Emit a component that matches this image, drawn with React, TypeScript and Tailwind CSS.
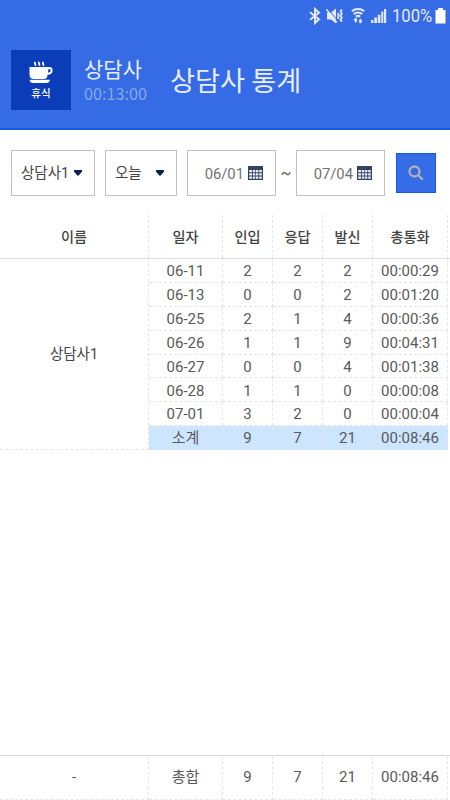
import React from 'react';

type Row = {
  date: string;
  incoming: number;
  answered: number;
  outgoing: number;
  total: string;
};

const rows: Row[] = [
  { date: '06-11', incoming: 2, answered: 2, outgoing: 2, total: '00:00:29' },
  { date: '06-13', incoming: 0, answered: 0, outgoing: 2, total: '00:01:20' },
  { date: '06-25', incoming: 2, answered: 1, outgoing: 4, total: '00:00:36' },
  { date: '06-26', incoming: 1, answered: 1, outgoing: 9, total: '00:04:31' },
  { date: '06-27', incoming: 0, answered: 0, outgoing: 4, total: '00:01:38' },
  { date: '06-28', incoming: 1, answered: 1, outgoing: 0, total: '00:00:08' },
  { date: '07-01', incoming: 3, answered: 2, outgoing: 0, total: '00:00:04' },
];

const StatusBar = () => (
  <div className="flex h-8 items-center pl-[309px] text-[#e4ebff]">
    <svg width="12" height="18" viewBox="0 0 12 18" fill="none" stroke="currentColor" strokeWidth="1.9">
      <path d="M1 5.2 10 12.2 6 16V2l4 3.8-9 7" />
    </svg>
    <svg className="ml-[5px]" width="18" height="18" viewBox="0 0 18 18">
      <path d="M1 5.5h4l5-4v15l-5-4H1z" fill="currentColor" />
      <path d="M2 2 11.5 13.4" stroke="#356be5" strokeWidth="1" />
      <path d="M.3 2.2 10.8 15.5" stroke="currentColor" strokeWidth="1.5" />
      <path d="M12.3 6v6M15.8 2.5l-1.3 2 1.3 2-1.3 2.2 1.3 2-1.3 2 1.3 2" fill="none" stroke="currentColor" strokeWidth="1.8" />
    </svg>
    <svg className="ml-[7px]" width="14" height="18" viewBox="0 0 14 18" fill="none" stroke="currentColor" strokeWidth="2">
      <path d="M.8 4.2c3.6-3 8.8-3 12.4 0M2.8 7.1c2.5-2 5.9-2 8.4 0M4.8 9.8c1.4-1.2 3-1.2 4.4 0" />
      <path d="M2.6 12.6h1V11h2v1.6h1l-2 3.6zM7.4 14.6h1v1.6h2v-1.6h1l-2-3.4z" fill="currentColor" stroke="none" />
    </svg>
    <svg className="ml-[5px]" width="17" height="18" viewBox="0 0 17 18" fill="currentColor">
      <path d="M1 13h2.4v3H1zM4.3 10.5H7V16H4.3zM7.8 7.8h2.6V16H7.8zM11.3 4.5h2V16h-2zM14 2h2.2v14H14z" />
    </svg>
    <span className="ml-[5px] w-[41px] origin-left scale-x-[0.9] text-[18.5px] leading-none whitespace-nowrap">100%</span>
    <svg className="ml-[2px]" width="11" height="18" viewBox="0 0 11 18" fill="#fff">
      <path d="M3 1h5v2h2.5v13.5H.5V3H3z" />
    </svg>
  </div>
);

const CoffeeIcon = () => (
  <svg width="24" height="23" viewBox="0 0 24 23" fill="#fff">
    <path d="M.5 6h19.5c2.4 0 3.6 1.2 3.6 3.2 0 3-1.8 4.6-5 4.6 0 2.8-1.6 4.2-3.6 4.2H5c-3 0-4.5-1.5-4.5-4.5z" />
    <path d="M19.3 8.2h1.1c1 0 1.2.5 1.2 1.2 0 1.4-1 2.2-2.5 2.2z" fill="#0b3db8" />
    <path d="M.5 18.8h20.5c-.5 2.3-1.7 3.3-3.5 3.3H4c-2 0-3-1-3.5-3.3z" />
    <path d="M6.2.8c-1.2 1.2 1 2.2 0 4M10.2.8c-1.2 1.2 1 2.2 0 4M14.2.8c-1.2 1.2 1 2.2 0 4" fill="none" stroke="#fff" strokeWidth="1.8" />
  </svg>
);

const CalendarIcon = () => (
  <svg width="15" height="14" viewBox="0 0 15 14">
    <path d="M0 0h15v14H0z" fill="#344263" />
    <path d="M1.2 4h3v2.3h-3zM5 4h2.3v2.3H5zM8 4h2.3v2.3H8zM11.2 4h2.6v2.3h-2.6zM1.2 7.2h3v2.3h-3zM5 7.2h2.3v2.3H5zM8 7.2h2.3v2.3H8zM11.2 7.2h2.6v2.3h-2.6zM1.2 10.4h3v2.4h-3zM5 10.4h2.3v2.4H5zM8 10.4h2.3v2.4H8zM11.2 10.4h2.6v2.4h-2.6z" fill="#eceef3" />
  </svg>
);

const Caret = () => (
  <svg width="8" height="6" viewBox="0 0 8 6">
    <path d="M0 0h8v1.5L4.8 5.5H3.2L0 1.5z" fill="#0c2058" />
  </svg>
);

const DateInput: React.FC<{ value: string }> = ({ value }) => (
  <div className="flex h-[46px] w-[89px] items-center justify-end border border-[#c2c2c2] pr-[12px]">
    <span className="mr-[4px] pt-[3px] text-[14.8px] text-[#727272]">{value}</span>
    <CalendarIcon />
  </div>
);

const Cells: React.FC<{ values: (string | number)[]; className: string }> = ({ values, className }) => (
  <>
    {values.map((value, i) => (
      <div key={i} className={`flex items-center justify-center border-r border-dashed border-[#e6e6e6] ${className}`}>
        {value}
      </div>
    ))}
  </>
);

const App: React.FC = () => {
  return (
    <div className="flex h-screen w-full flex-col overflow-hidden bg-white font-['Roboto','Noto_Sans_CJK_KR',sans-serif] text-[#5a5a5a]">
      <header className="h-[130px] shrink-0 border-b-2 border-[#0d5be8] bg-[#356be5]">
        <StatusBar />
        <div className="flex pt-[18px] pl-[11px]">
          <div className="flex h-[60px] w-[60px] flex-col items-center bg-[#0b3db8] pt-[11px] text-white">
            <CoffeeIcon />
            <span className="mt-[3px] text-[10.5px] leading-[14px] font-medium">휴식</span>
          </div>
          <div className="ml-[13px] w-[86px] font-['Noto_Sans_CJK_KR',sans-serif]">
            <div className="mt-[4px] text-[21px] leading-[28px] text-[#e8eeff]">상담사</div>
            <div className="text-[16.2px] leading-[22px] text-[#86a8e8]">00:13:00</div>
          </div>
          <h1 className="mt-[9px] font-['Noto_Sans_CJK_KR',sans-serif] text-[27.2px] leading-[40px] font-normal text-[#e8eeff]">상담사 통계</h1>
        </div>
      </header>

      <div className="flex h-[85px] shrink-0 items-start pt-[20px] pl-[11px]">
        <div className="flex h-[46px] w-[84px] items-center justify-between border border-[#c2c2c2] pr-[12px] pl-[9px] text-[14.5px] text-[#444]">
          <span className="pt-[2px]">상담사1</span>
          <Caret />
        </div>
        <div className="ml-[10px] flex h-[46px] w-[72px] items-center justify-between border border-[#c2c2c2] pr-[12px] pl-[9px] text-[14.5px] text-[#444]">
          <span className="pt-[2px]">오늘</span>
          <Caret />
        </div>
        <div className="ml-[10px] flex items-center">
          <DateInput value="06/01" />
          <span className="w-[20px] pt-[2px] text-center text-[16px]">~</span>
          <DateInput value="07/04" />
        </div>
        <button className="mt-[3px] ml-[11px] flex h-[40px] w-[40px] items-center justify-center border border-[#0d5be8] bg-[#356be5]">
          <svg width="16" height="16" viewBox="0 0 16 16" fill="none" stroke="#b2b0b5" strokeWidth="2.3">
            <circle cx="6.5" cy="6.5" r="5" />
            <path d="m10 10 4.8 4.8" />
          </svg>
        </button>
      </div>

      <div className="grid h-[44px] shrink-0 grid-cols-[149px_74px_50px_50px_50px_75px] border-b border-[#dcdcdc] text-[14.2px] font-medium text-[#444]">
        <Cells values={['이름', '일자', '인입', '응답', '발신', '총통화']} className="pt-[2px]" />
      </div>

      <div className="flex h-[191px] shrink-0">
        <div className="flex w-[149px] items-center justify-center border-r border-b border-dashed border-[#e6e6e6] pt-[2px] text-[14.5px] text-[#444]">상담사1</div>
        <div className="grid grid-cols-[74px_50px_50px_50px_75px] grid-rows-8 text-[15px]">
          {rows.map((row) => (
            <Cells
              key={row.date}
              values={[row.date, row.incoming, row.answered, row.outgoing, row.total]}
              className="border-b pt-[2px]"
            />
          ))}
          <Cells values={['소계', 9, 7, 21, '00:08:46']} className="bg-[#cde5ff]" />
        </div>
      </div>

      <div className="mt-auto grid h-[45px] shrink-0 grid-cols-[149px_74px_50px_50px_50px_75px] border-t border-[#dcdcdc] text-[15px]">
        <Cells values={['-', '총합', 9, 7, 21, '00:08:46']} className="border-b" />
      </div>
    </div>
  );
};

export default App;
